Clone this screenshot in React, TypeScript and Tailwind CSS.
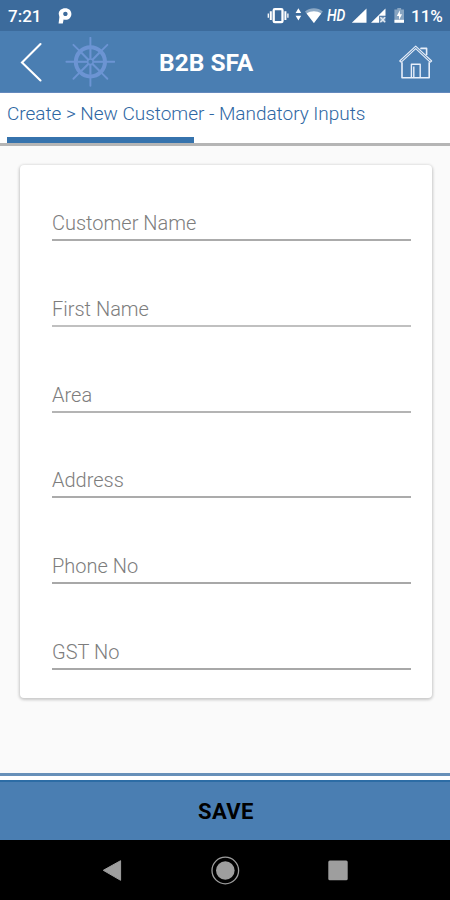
import React from "react";

interface Field {
  id: string;
  label: string;
  underline: string;
}

const FIELDS: Field[] = [
  { id: "customer", label: "Customer Name", underline: "bg-[#ababab]" },
  { id: "first", label: "First Name", underline: "bg-[#c0c0c0]" },
  { id: "area", label: "Area", underline: "bg-[#b4b4b4]" },
  { id: "address", label: "Address", underline: "bg-[#ababab]" },
  { id: "phone", label: "Phone No", underline: "bg-[#a8a8a8]" },
  { id: "gst", label: "GST No", underline: "bg-[#a8a8a8]" },
];

const SPOKES = [0, 45, 90, 135, 180, 225, 270, 315];

function ShipWheel() {
  return (
    <svg className="ml-[22px] size-[50px]" viewBox="0 0 50 50" fill="none" stroke="#6c94d3">
      <circle cx="25.4" cy="24.8" r="14.6" strokeWidth="4" />
      <circle cx="25.4" cy="24.8" r="2.8" strokeWidth="1.6" />
      {SPOKES.map((deg) => (
        <g key={deg} transform={`translate(25.4 24.8) rotate(${deg})`}>
          <path d="M0-3V-13" strokeWidth="2.1" />
          <path d="M0-15V-24" strokeWidth="1.9" strokeLinecap="round" />
        </g>
      ))}
    </svg>
  );
}

function StatusBar() {
  return (
    <div className="flex h-[31px] items-center bg-[#3c6b9c] pt-px text-white">
      <span className="ml-2 w-[34px] text-[17px] font-medium leading-none">7:21</span>
      <svg className="ml-[16px] h-[16px] w-[14px]" viewBox="0 0 14 16">
        <path
          fill="#fff"
          fillRule="evenodd"
          d="M7.2 0.2C11 0.2 13.4 2.6 13.4 5.9s-2.5 5.9-5.8 5.9c-.8 0-1.4-.1-2-.4L4.8 15.6H0.6L1.4 9 0.7 5.8C0.8 2.5 3.4.2 7.2.2ZM7.4 3.8c-1.3 0-2.2.9-2.2 2.1s.9 2.1 2.2 2.1 2.2-.9 2.2-2.1-.9-2.1-2.2-2.1Z"
        />
      </svg>
      {/* vibrate, data arrows, wifi */}
      <svg className="ml-[195px] h-[18px] w-[56px]" viewBox="267 7 56 18">
        <rect x="273.7" y="9.2" width="8.8" height="13" rx="1.2" fill="none" stroke="#fff" strokeWidth="2.3" />
        <path d="M270.8 11.3v8.6M285.4 11.3v8.6" stroke="#fff" strokeWidth="2" />
        <path d="M268.3 13.4v4.4M287.9 13.4v4.4" stroke="#fff" strokeWidth="1.3" />
        <path d="M298.4 8.3 301.2 13h-5.6ZM298.4 20.5 301.2 15.8h-5.6Z" fill="#fff" />
        <path d="M305 11.4C310.2 7.2 317.6 7.2 322.8 11.4L313.9 23Z" fill="#8da9c5" />
        <path d="M306.6 13.6C311 10.6 316.8 10.6 321.2 13.6L313.9 23Z" fill="#fff" />
      </svg>
      <span className="ml-[4px] w-[19px] origin-left scale-x-[0.87] text-[16px] font-medium italic leading-none">HD</span>
      <svg className="ml-[5px] h-[18px] w-[56px]" viewBox="351 7 56 18">
        <path d="M366.5 8.5v14.3h-14.7Z" fill="#fff" />
        <path d="M385.5 8.5v7.2h-6.3v7.1h-8.2Z" fill="#fff" />
        <path d="M380 16.6h5.4v5.6H380Z" fill="#7e9dbd" />
        <path d="m380.4 17.2 4.8 5M385.2 17.2l-4.8 5" stroke="#e3eaf2" strokeWidth="1.3" />
        <path d="M397.3 8h3.8v1.5h2.9V19h-9.6V9.5h2.9Z" fill="#88a5c2" />
        <path d="M394.4 19.5h9.6v3.3h-9.6Z" fill="#fff" />
        <path d="m399.9 10.2-3.1 5.7h2.2v4.2l3-5.8h-2.1Z" fill="#fff" />
      </svg>
      <span className="ml-[4px] whitespace-nowrap text-[17px] font-medium leading-none">11%</span>
    </div>
  );
}

function Header() {
  return (
    <header className="flex h-[62px] items-center border-b border-[#6389bd] bg-[#4a7eb2]">
      <svg className="ml-[20px] h-[40px] w-[23px]" viewBox="0 0 23 40">
        <path d="M20.5 2 2 20.5 20.5 38.5" fill="none" stroke="#fff" strokeWidth="2.1" strokeLinecap="round" />
      </svg>
      <ShipWheel />
      <h1 className="ml-[44px] w-[99px] whitespace-nowrap pt-[3px] text-[24.5px] font-bold leading-none text-white">
        B2B SFA
      </h1>
      <svg
        className="ml-[140px] h-[36px] w-[36px]"
        viewBox="398 44 36 36"
        fill="none"
        stroke="#e8effa"
        strokeWidth="1.4"
        strokeLinejoin="round"
      >
        <path d="m399.7 61 16-14.8 16 14.8-1.6 1.2-14.4-13.5-14.4 13.5Z" strokeWidth="1.1" />
        <path d="M402 62.2v15.6h27.2V62.2" strokeWidth="1.6" />
        <path d="M411.4 77.5V64.2h8.8v13.3M413.8 77.5V66.5" />
        <path d="M421 49.3v-.9h5.6v6.6" strokeWidth="1.6" />
      </svg>
    </header>
  );
}

function NavBar() {
  return (
    <nav className="flex h-[60px] items-center justify-center bg-black">
      <svg className="h-[40px] w-[260px]" viewBox="95 850 260 40" fill="#9e9e9e">
        <path d="M103.3 870.3 120.6 860.7v19.6Z" stroke="#9e9e9e" strokeLinejoin="round" />
        <circle cx="225.3" cy="870.5" r="9.3" />
        <circle cx="225.3" cy="870.5" r="13.3" fill="none" stroke="#9e9e9e" strokeWidth="1.3" />
        <rect x="328.3" y="860.5" width="19.4" height="19.8" rx="1.5" />
      </svg>
    </nav>
  );
}

export default function App() {
  return (
    <div className="flex h-[900px] w-[450px] flex-col overflow-hidden bg-[#fafafa] font-['Roboto',sans-serif]">
      <StatusBar />
      <Header />

      {/* Breadcrumb with progress */}
      <div className="flex h-[53px] flex-col justify-between border-b-[3px] border-[#b5b5b5] bg-white">
        <p className="mt-[8px] whitespace-nowrap pl-[7px] text-[19px] font-light leading-[25px] tracking-[-0.03px] text-[#2f67a3]">
          Create &gt; New Customer - Mandatory Inputs
        </p>
        <div className="ml-[7px] h-[6px] w-[187px] bg-[#3673ad]" />
      </div>

      <main className="flex-1 pl-[19.5px] pr-[18.5px] pt-[19px]">
        <div className="h-[533px] rounded-[4px] bg-white pl-[32.5px] pr-[20.5px] pt-[41px] shadow-[0_1px_3px_1px_rgba(0,0,0,0.2)]">
          {FIELDS.map((field) => (
            <div key={field.id} className="h-[85.8px]">
              <label className="block h-[33px] whitespace-nowrap text-[20px] font-light leading-[34px] text-[#7d7d7d]">
                {field.label}
              </label>
              <div className={`h-[2px] ${field.underline}`} />
            </div>
          ))}
        </div>
      </main>

      <div className="h-[7px] border-t-[3px] border-[#6790b9] bg-white" />
      <button className="h-[60px] border-t-2 border-[#2c6ca5] bg-[#4a7eb2] pl-[2px] text-[22px] font-bold tracking-[0.4px] text-black">
        SAVE
      </button>
      <NavBar />
    </div>
  );
}
